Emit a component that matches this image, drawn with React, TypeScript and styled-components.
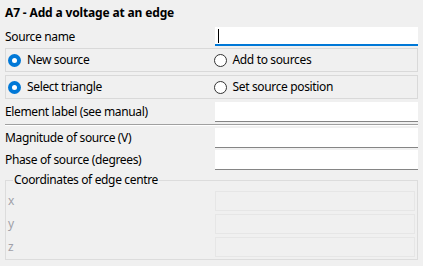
import React from "react";
import styled, { createGlobalStyle } from "styled-components";

const Global = createGlobalStyle`
  html, body { margin: 0; padding: 0; background: #f0f0f0; }
  body {
    font-family: "Noto Sans", "Segoe UI", sans-serif;
    font-size: 12px;
    letter-spacing: -0.35px;
    color: #000;
  }
`;

const Panel = styled.div`
  width: 423px;
  height: 266px;
  box-sizing: border-box;
  padding: 3px 5px 0 5px;
  display: flex;
  flex-direction: column;
`;

const Title = styled.div`
  font-weight: bold;
  letter-spacing: -0.15px;
  height: 20px;
  line-height: 20px;
`;

const FieldRow = styled.div<{ $mt: number }>`
  display: grid;
  grid-template-columns: 210px 1fr;
  align-items: center;
  margin-top: ${(p) => p.$mt}px;
`;

const Label = styled.div<{ $disabled?: boolean }>`
  line-height: 16px;
  white-space: nowrap;
  color: ${(p) => (p.$disabled ? "#a0a0a8" : "#000")};
  padding-left: ${(p) => (p.$disabled ? 2 : 0)}px;
`;

const TextBox = styled.div<{ $focused?: boolean; $h: number }>`
  box-sizing: border-box;
  height: ${(p) => p.$h}px;
  background: #fff;
  border-bottom: ${(p) => (p.$focused ? "2px solid #0078d7" : "1px solid #858585")};
  display: flex;
  align-items: center;
  padding-left: 3px;
`;

const DisabledBox = styled.div`
  box-sizing: border-box;
  height: 20px;
  background: #f0f0f0;
  border: 1px solid #e6e6e6;
`;

const Caret = styled.span`
  width: 1px;
  height: 14px;
  background: #000;
`;

const RadioBox = styled.div<{ $mt: number }>`
  box-sizing: border-box;
  height: 24px;
  margin-top: ${(p) => p.$mt}px;
  border: 1px solid #d9d9d9;
  display: grid;
  grid-template-columns: 1fr 1fr;
  align-items: center;
`;

const RadioItem = styled.div`
  display: flex;
  align-items: center;
  gap: 6px;
  padding-left: 2px;
  line-height: 16px;
  white-space: nowrap;
`;

const Separator = styled.div`
  height: 0;
  margin-top: 2px;
  border-top: 1px solid #a0a0a0;
  border-bottom: 1px solid #ffffff;
`;

const Group = styled.fieldset`
  margin: 3px 0 0 0;
  padding: 0 2px 2px 0;
  border: 1px solid #dcdcdc;
  min-width: 0;
  display: flex;
  flex-direction: column;
  gap: 3px;
`;

const Legend = styled.legend`
  margin-left: 7px;
  padding: 0 1px;
  line-height: 14px;
  white-space: nowrap;
`;

const GroupRow = styled.div<{ $first?: boolean }>`
  display: grid;
  grid-template-columns: 209px 1fr;
  align-items: center;
  margin-top: ${(p) => (p.$first ? 4 : 0)}px;
`;

const RadioIcon = ({ checked }: { checked: boolean }) => (
  <svg width="13" height="13" viewBox="0 0 13 13">
    {checked ? (
      <>
        <circle cx="6.5" cy="6.5" r="6.5" fill="#0078d7" />
        <circle cx="6.5" cy="6.5" r="2.5" fill="#ffffff" />
      </>
    ) : (
      <circle cx="6.5" cy="6.5" r="6" fill="#ffffff" stroke="#333333" strokeWidth="1" />
    )}
  </svg>
);

const Radio = ({ checked, label }: { checked: boolean; label: string }) => (
  <RadioItem>
    <RadioIcon checked={checked} />
    <span>{label}</span>
  </RadioItem>
);

export default function App() {
  return (
    <>
      <Global />
      <Panel>
        <Title>A7 - Add a voltage at an edge</Title>
        <FieldRow $mt={4}>
          <Label>Source name</Label>
          <TextBox $focused $h={19}>
            <Caret />
          </TextBox>
        </FieldRow>
        <RadioBox $mt={2}>
          <Radio checked label="New source" />
          <Radio checked={false} label="Add to sources" />
        </RadioBox>
        <RadioBox $mt={3}>
          <Radio checked label="Select triangle" />
          <Radio checked={false} label="Set source position" />
        </RadioBox>
        <FieldRow $mt={3}>
          <Label>Element label (see manual)</Label>
          <TextBox $h={20} />
        </FieldRow>
        <Separator />
        <FieldRow $mt={2}>
          <Label>Magnitude of source (V)</Label>
          <TextBox $h={20} />
        </FieldRow>
        <FieldRow $mt={2}>
          <Label>Phase of source (degrees)</Label>
          <TextBox $h={20} />
        </FieldRow>
        <Group>
          <Legend>Coordinates of edge centre</Legend>
          <GroupRow $first>
            <Label $disabled>x</Label>
            <DisabledBox />
          </GroupRow>
          <GroupRow>
            <Label $disabled>y</Label>
            <DisabledBox />
          </GroupRow>
          <GroupRow>
            <Label $disabled>z</Label>
            <DisabledBox />
          </GroupRow>
        </Group>
      </Panel>
    </>
  );
}
